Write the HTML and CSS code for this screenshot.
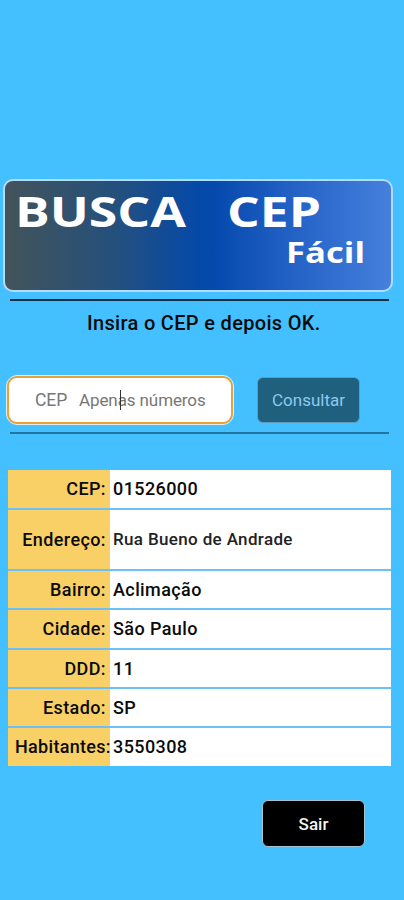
FILE: index.html
```html
<!DOCTYPE html>
<html lang="pt-BR">
<head>
<meta charset="utf-8">
<title>Busca CEP Fácil</title>
<link rel="stylesheet" href="styles.css">
</head>
<body>
<main class="screen">
  <header class="banner">
    <svg class="banner-art" viewBox="0 0 386 109" width="386" height="109">
      <text class="title" x="10" y="46" textLength="171" lengthAdjust="spacingAndGlyphs">BUSCA</text>
      <text class="title" x="222" y="46" textLength="94" lengthAdjust="spacingAndGlyphs">CEP</text>
      <text class="subtitle" x="281" y="81.5" textLength="79" lengthAdjust="spacingAndGlyphs">Fácil</text>
    </svg>
  </header>
  <hr class="rule">
  <p class="hint">Insira o CEP e depois OK.</p>
  <div class="form">
    <div class="field"><span class="prefix">CEP</span><span class="ph">Apen<i class="caret"></i>as números</span></div>
    <button class="btn search">Consultar</button>
  </div>
  <hr class="rule teal">
  <dl class="results">
    <dt>CEP:</dt><dd>01526000</dd>
    <dt>Endereço:</dt><dd class="street">Rua Bueno de Andrade</dd>
    <dt>Bairro:</dt><dd>Aclimação</dd>
    <dt>Cidade:</dt><dd>São Paulo</dd>
    <dt>DDD:</dt><dd>11</dd>
    <dt>Estado:</dt><dd>SP</dd>
    <dt class="wide"><span>Habitantes:</span></dt><dd>3550308</dd>
  </dl>
  <button class="btn exit">Sair</button>
</main>
</body>
</html>
```
FILE: styles.css
```css
* { box-sizing: border-box; }
body {
  margin: 0;
  background: #44bfff;
  font-family: Roboto, "Liberation Sans", sans-serif;
  color: #0b0b0b;
}
.screen {
  display: flex;
  flex-direction: column;
  align-items: flex-start;
  height: 900px;
  padding-top: 179px;
  overflow: hidden;
}
.banner {
  width: 390px;
  height: 113px;
  margin-left: 3px;
  border: 2px solid #b4dcfa;
  border-radius: 10px;
  background: linear-gradient(90deg, #43545a 0%, #25507c 28%, #0549a8 50%, #0549ac 54%, #2462c6 75%, #4580dc 100%);
}
.banner-art { display: block; }
.title, .subtitle { fill: #fff; font-family: "Open Sans", "Noto Sans", sans-serif; font-weight: 700; }
.title { font-size: 42px; }
.subtitle { font-size: 28px; }
.rule {
  width: 379px;
  height: 2px;
  margin: 7px 0 0 10px;
  border: 0;
  background: #0b3046;
}
.rule.teal { margin-top: 7px; background: #20769c; }
.hint {
  margin: 10px 0 0 87px;
  font-size: 20px;
  line-height: 24px;
  font-weight: 500;
  letter-spacing: .32px;
  white-space: nowrap;
}
.form {
  display: flex;
  align-items: center;
  height: 50px;
  margin: 40px 0 0 7px;
}
.field {
  display: flex;
  align-items: center;
  width: 226px;
  height: 48px;
  padding: 0 0 1px 26px;
  border: 2px solid #eaa13a;
  border-radius: 10px;
  outline: 1px solid #e4eef0;
  background: #fff;
  font-size: 17px;
  font-weight: 400;
  letter-spacing: -.1px;
  color: #777;
  white-space: nowrap;
}
.prefix { width: 44px; font-size: 17.5px; }
.ph { position: relative; }
.caret {
  position: absolute;
  left: 41px;
  top: 0;
  width: 1px;
  height: 20px;
  background: #333;
}
.btn {
  padding: 0;
  border: 1px solid #a5c4cf;
  border-radius: 6px;
  font-family: inherit;
  font-size: 17px;
  text-align: center;
}
.search {
  width: 103px;
  height: 46px;
  margin-left: 24px;
  border-color: #5b9dbb;
  background: #20607f;
  color: #8cc9ec;
}
.results {
  display: grid;
  grid-template-columns: 102px 281px;
  grid-template-rows: 38px 59px 37px 38px 37px 37px 38px;
  row-gap: 2px;
  margin: 36px 0 0 8px;
  background: #6ec1f6;
  font-size: 18px;
  font-weight: 500;
  letter-spacing: .4px;
}
.results dt, .results dd {
  display: flex;
  align-items: center;
  margin: 0;
  padding-bottom: 1px;
  white-space: nowrap;
}
.results dt { justify-content: flex-end; padding-right: 4px; background: #f8d065; }
.results dt.wide { justify-content: flex-start; padding: 0 0 1px 7px; letter-spacing: .3px; }
.wide span { position: relative; z-index: 1; }
.results dd { padding-left: 3px; background: #fff; }
.results dd.street { font-size: 17px; letter-spacing: .35px; color: #222; }
.exit {
  width: 103px;
  height: 47px;
  margin: 34px 0 0 262px;
  background: #000;
  color: #f2f2f2;
  font-weight: 500;
}
```
